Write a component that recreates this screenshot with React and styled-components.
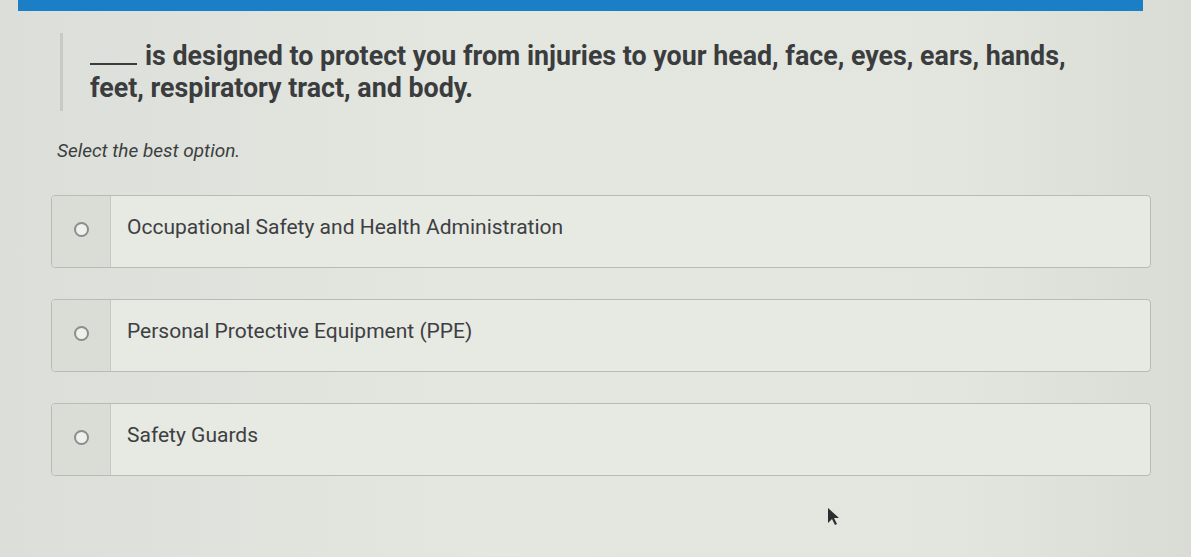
import React from "react";
import styled, { createGlobalStyle } from "styled-components";

const Global = createGlobalStyle`
  body {
    margin: 0;
    background: #e2e4de;
    font-family: Roboto, "Liberation Sans", sans-serif;
    color: #3b3e40;
  }
`;

const Page = styled.div`
  width: 1191px;
  height: 557px;
  overflow: hidden;
  background: linear-gradient(90deg, #dcdfd9 0%, #e4e6e0 40%, #e3e5df 80%, #d9dcd5 100%);
`;

const TopBar = styled.div`
  height: 11px;
  margin: 0 48px 0 18px;
  background: #1b7fc8;
`;

const Question = styled.div`
  margin: 22px 0 0 60px;
  padding: 7px 0 7px 27px;
  border-left: 3px solid #c8cac5;
  font-size: 26.8px;
  font-weight: 700;
  line-height: 32px;
  color: #3a3c3e;
`;

const Blank = styled.span`
  display: inline-block;
  width: 47px;
  border-bottom: 2px solid #3a3c3e;
  margin-right: 8px;
`;

const Hint = styled.p`
  margin: 28px 0 0 57px;
  font-size: 19px;
  font-style: italic;
  color: #3b3e40;
`;

const Options = styled.div`
  display: flex;
  flex-direction: column;
  gap: 31px;
  margin: 33px 40px 0 51px;
`;

const Card = styled.label`
  display: flex;
  height: 71px;
  border: 1.5px solid #b9bcb6;
  border-radius: 4px;
  background: #e7e9e3;
  overflow: hidden;
`;

const RadioCell = styled.div`
  width: 58px;
  flex: none;
  display: flex;
  align-items: center;
  justify-content: center;
  background: #dadcd6;
  border-right: 1.5px solid #c6c9c3;
  padding-bottom: 4px;
`;

const Radio = styled.span`
  width: 11px;
  height: 11px;
  border: 2px solid #8b8e8c;
  border-radius: 50%;
  background: #eef0eb;
`;

const Label = styled.span`
  display: flex;
  align-items: center;
  padding: 0 0 10px 16px;
  font-size: 21px;
  color: #3d4042;
`;

const Cursor = styled.svg`
  position: absolute;
  left: 827px;
  top: 507px;
`;

const options = [
  "Occupational Safety and Health Administration",
  "Personal Protective Equipment (PPE)",
  "Safety Guards",
];

export default function App() {
  return (
    <Page>
      <Global />
      <TopBar />
      <Question>
        <Blank />
        is designed to protect you from injuries to your head, face, eyes, ears, hands,
        <br />
        feet, respiratory tract, and body.
      </Question>
      <Hint>Select the best option.</Hint>
      <Options>
        {options.map((o) => (
          <Card key={o}>
            <RadioCell>
              <Radio />
            </RadioCell>
            <Label>{o}</Label>
          </Card>
        ))}
      </Options>
      <Cursor width="14" height="20" viewBox="0 0 14 20">
        <path d="M1 1 L1 16 L5 12 L8 18 L10 17 L7 11 L12 11 Z" fill="#2b2d2e" />
      </Cursor>
    </Page>
  );
}
